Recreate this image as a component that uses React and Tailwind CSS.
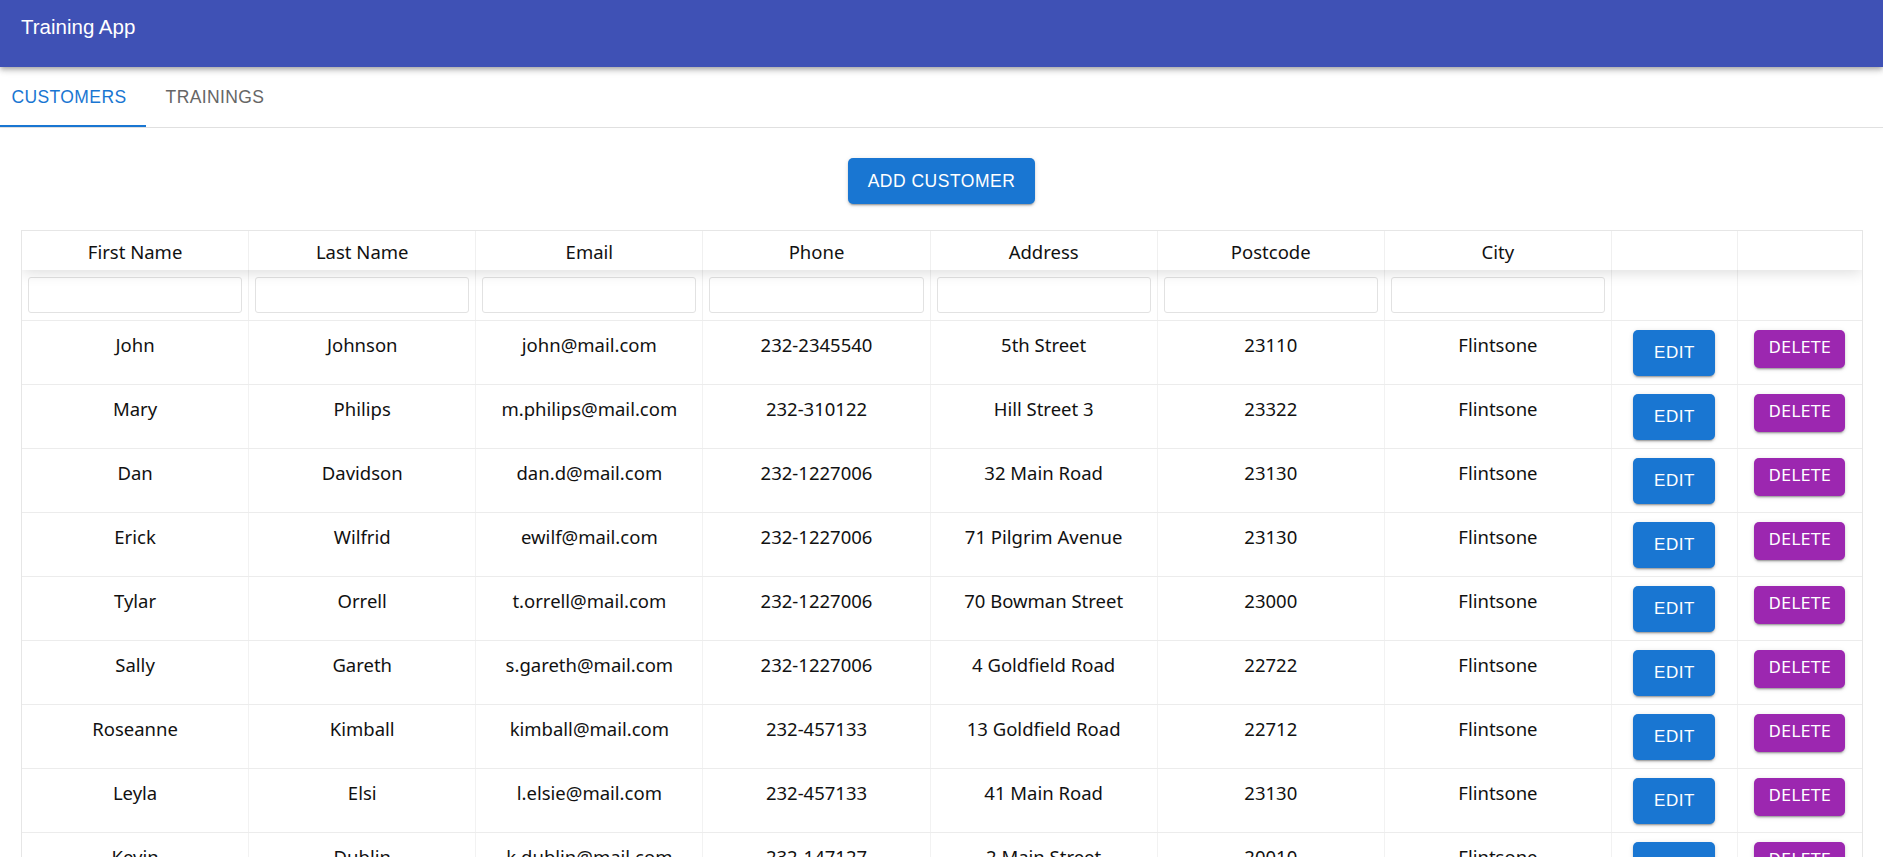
import React from "react";

const rows = [
  ["John", "Johnson", "john@mail.com", "232-2345540", "5th Street", "23110", "Flintsone"],
  ["Mary", "Philips", "m.philips@mail.com", "232-310122", "Hill Street 3", "23322", "Flintsone"],
  ["Dan", "Davidson", "dan.d@mail.com", "232-1227006", "32 Main Road", "23130", "Flintsone"],
  ["Erick", "Wilfrid", "ewilf@mail.com", "232-1227006", "71 Pilgrim Avenue", "23130", "Flintsone"],
  ["Tylar", "Orrell", "t.orrell@mail.com", "232-1227006", "70 Bowman Street", "23000", "Flintsone"],
  ["Sally", "Gareth", "s.gareth@mail.com", "232-1227006", "4 Goldfield Road", "22722", "Flintsone"],
  ["Roseanne", "Kimball", "kimball@mail.com", "232-457133", "13 Goldfield Road", "22712", "Flintsone"],
  ["Leyla", "Elsi", "l.elsie@mail.com", "232-457133", "41 Main Road", "23130", "Flintsone"],
  ["Kevin", "Dublin", "k.dublin@mail.com", "232-147127", "2 Main Street", "20010", "Flintsone"],
];

const headers = ["First Name", "Last Name", "Email", "Phone", "Address", "Postcode", "City", "", ""];

const grid = "grid grid-cols-[repeat(7,minmax(0,1fr))_126px_124px]";

export default function App() {
  return (
    <div className="min-h-screen bg-white font-['Liberation_Sans',Arial,sans-serif]">
      <header className="relative z-20 h-[67px] bg-[#3f51b5] text-white shadow-[0px_2px_4px_-1px_rgba(0,0,0,0.2),0px_4px_5px_0px_rgba(0,0,0,0.14),0px_1px_10px_0px_rgba(0,0,0,0.12)]">
        <div className="pl-[21px] pt-[14px] text-[20.5px] leading-[26px]">Training App</div>
      </header>

      <nav className="flex h-[61px] border-b border-[#e0e0e0]">
        <div className="relative flex w-[146px] items-center justify-center pr-[8px] text-[17.5px] tracking-[0.4px] text-[#1976d2]">
          CUSTOMERS
          <span className="absolute bottom-0 left-0 h-[2px] w-full bg-[#1976d2]" />
        </div>
        <div className="flex w-[146px] items-center justify-center pr-[8px] text-[17.5px] tracking-[0.4px] text-[#666666]">
          TRAININGS
        </div>
      </nav>

      <div className="flex justify-center pt-[30px]">
        <button className="h-[46px] rounded-[5px] bg-[#1976d2] px-[20px] text-[17.5px] tracking-[0.5px] text-white shadow-[0px_3px_1px_-2px_rgba(0,0,0,0.2),0px_2px_2px_0px_rgba(0,0,0,0.14),0px_1px_5px_0px_rgba(0,0,0,0.12)]">
          ADD CUSTOMER
        </button>
      </div>

      <div className="ml-[21px] mr-[20px] mt-[26px] overflow-hidden border border-[#e6e6e6] font-['Noto_Sans','Open_Sans',sans-serif] text-[18.5px] text-[#111111]">
        <div className={`${grid} relative z-10 bg-white shadow-[0_2px_15px_0_rgba(0,0,0,0.15)]`}>
          {headers.map((h, i) => (
            <div
              key={i}
              className="border-r border-[#f0f0f0] pb-[4px] pt-[6px] text-center leading-[29px] last:border-r-0"
            >
              {h}
            </div>
          ))}
        </div>
        <div className={`${grid} border-b border-[#ececec]`}>
          {headers.map((h, i) => (
            <div key={i} className="h-[50px] border-r border-[#f0f0f0] px-[6px] pt-[7px] last:border-r-0">
              {i < 7 && (
                <input className="h-[36px] w-full rounded-[3px] border border-[#e2e2e2] bg-white outline-none" />
              )}
            </div>
          ))}
        </div>
        {rows.map((r, ri) => (
          <div key={ri} className={`${grid} border-b border-[#ececec]`}>
            {r.map((c, ci) => (
              <div
                key={ci}
                className="border-r border-[#f2f2f2] pb-[8px] pt-[9px] text-center leading-[30px]"
              >
                {c}
              </div>
            ))}
            <div className="flex justify-center border-r border-[#f2f2f2] pb-[8px] pt-[9px]">
              <button className="h-[46px] w-[82px] rounded-[5px] bg-[#1976d2] font-['Liberation_Sans',Arial,sans-serif] text-[17px] tracking-[0.5px] text-white shadow-[0px_3px_1px_-2px_rgba(0,0,0,0.2),0px_2px_2px_0px_rgba(0,0,0,0.14),0px_1px_5px_0px_rgba(0,0,0,0.12)]">
                EDIT
              </button>
            </div>
            <div className="flex items-start justify-center pb-[8px] pt-[9px]">
              <button className="h-[38px] w-[91px] rounded-[5px] bg-[#9c27b0] font-['DejaVu_Sans',sans-serif] text-[15.5px] tracking-[0.5px] text-white shadow-[0px_3px_1px_-2px_rgba(0,0,0,0.2),0px_2px_2px_0px_rgba(0,0,0,0.14),0px_1px_5px_0px_rgba(0,0,0,0.12)]">
                DELETE
              </button>
            </div>
          </div>
        ))}
      </div>
    </div>
  );
}
